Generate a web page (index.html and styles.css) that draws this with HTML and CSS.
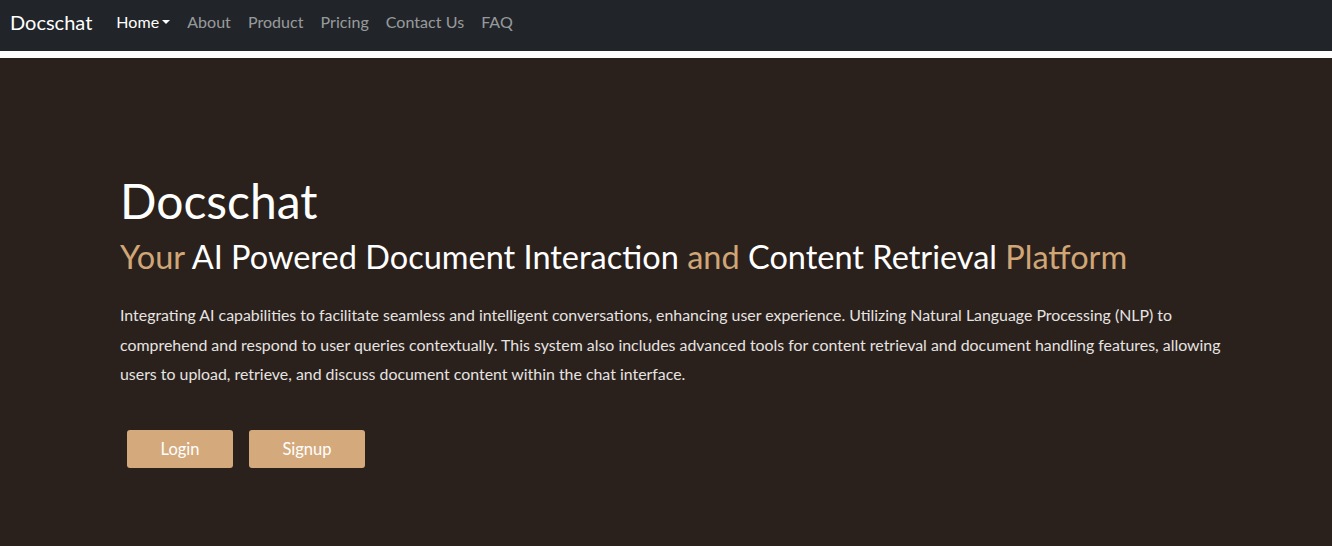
FILE: index.html
```html
<!DOCTYPE html>
<html lang="en">
<head>
<meta charset="utf-8">
<title>Docschat</title>
<link rel="stylesheet" href="styles.css">
</head>
<body>
<nav class="navbar">
  <a class="brand" href="#">Docschat</a>
  <ul class="nav">
    <li><a class="nav-link active" href="#">Home<span class="caret"></span></a></li>
    <li><a class="nav-link" href="#">About</a></li>
    <li><a class="nav-link" href="#">Product</a></li>
    <li><a class="nav-link" href="#">Pricing</a></li>
    <li><a class="nav-link" href="#">Contact Us</a></li>
    <li><a class="nav-link" href="#">FAQ</a></li>
  </ul>
</nav>
<section class="hero">
  <div class="hero-inner">
    <h1 class="title">Docschat</h1>
    <h2 class="subtitle"><span class="gold">Your</span> AI Powered Document Interaction <span class="gold">and</span> Content Retrieval <span class="gold">Platform</span></h2>
    <p class="lead">Integrating AI capabilities to facilitate seamless and intelligent conversations, enhancing user experience. Utilizing Natural Language Processing (NLP) to comprehend and respond to user queries contextually. This system also includes advanced tools for content retrieval and document handling features, allowing users to upload, retrieve, and discuss document content within the chat interface.</p>
    <div class="actions">
      <a class="btn btn-login" href="#">Login</a>
      <a class="btn btn-signup" href="#">Signup</a>
    </div>
  </div>
</section>
</body>
</html>
```
FILE: styles.css
```css
* { box-sizing: border-box; }
html, body { margin: 0; padding: 0; }
body {
  font-family: Lato, "Open Sans", sans-serif;
  background: #ffffff;
  height: 546px;
  overflow: hidden;
}
a { text-decoration: none; }
.navbar {
  height: 51px;
  background: #212529;
  display: flex;
  align-items: center;
  padding: 0 10px 8px 10px;
}
.brand {
  color: #ffffff;
  font-size: 20px;
  margin-right: 24px;
}
.nav {
  list-style: none;
  display: flex;
  margin: 0;
  padding: 0;
  gap: 17px;
}
.nav-link {
  color: rgba(255,255,255,0.55);
  font-size: 16px;
  letter-spacing: 0.05px;
  display: flex;
  align-items: center;
}
.nav-link.active { color: #ffffff; }
.caret {
  display: inline-block;
  margin-left: 3px;
  border-top: 4px solid #ffffff;
  border-left: 4px solid transparent;
  border-right: 4px solid transparent;
}
.hero {
  margin-top: 7px;
  background: #2b211c;
  height: 488px;
}
.hero-inner {
  padding: 115px 70px 0 120px;
}
.title {
  margin: 0;
  font-weight: 400;
  font-size: 48px;
  line-height: 56px;
  color: #ffffff;
}
.subtitle {
  margin: 6px 0 0 0;
  font-weight: 400;
  font-size: 32.5px;
  line-height: 44px;
  color: #ffffff;
}
.gold { color: #d0a677; }
.lead {
  margin: 21px 0 0 0;
  font-size: 15.9px;
  line-height: 29.5px;
  color: #e6e4e2;
  max-width: 1130px;
}
.actions {
  display: flex;
  gap: 16px;
  margin-top: 41px;
  padding-left: 7px;
}
.btn {
  display: inline-flex;
  align-items: center;
  justify-content: center;
  height: 38px;
  background: #d4aa7d;
  color: #ffffff;
  font-size: 16.5px;
  border-radius: 3px;
}
.btn-login { width: 106px; }
.btn-signup { width: 116px; }
```
